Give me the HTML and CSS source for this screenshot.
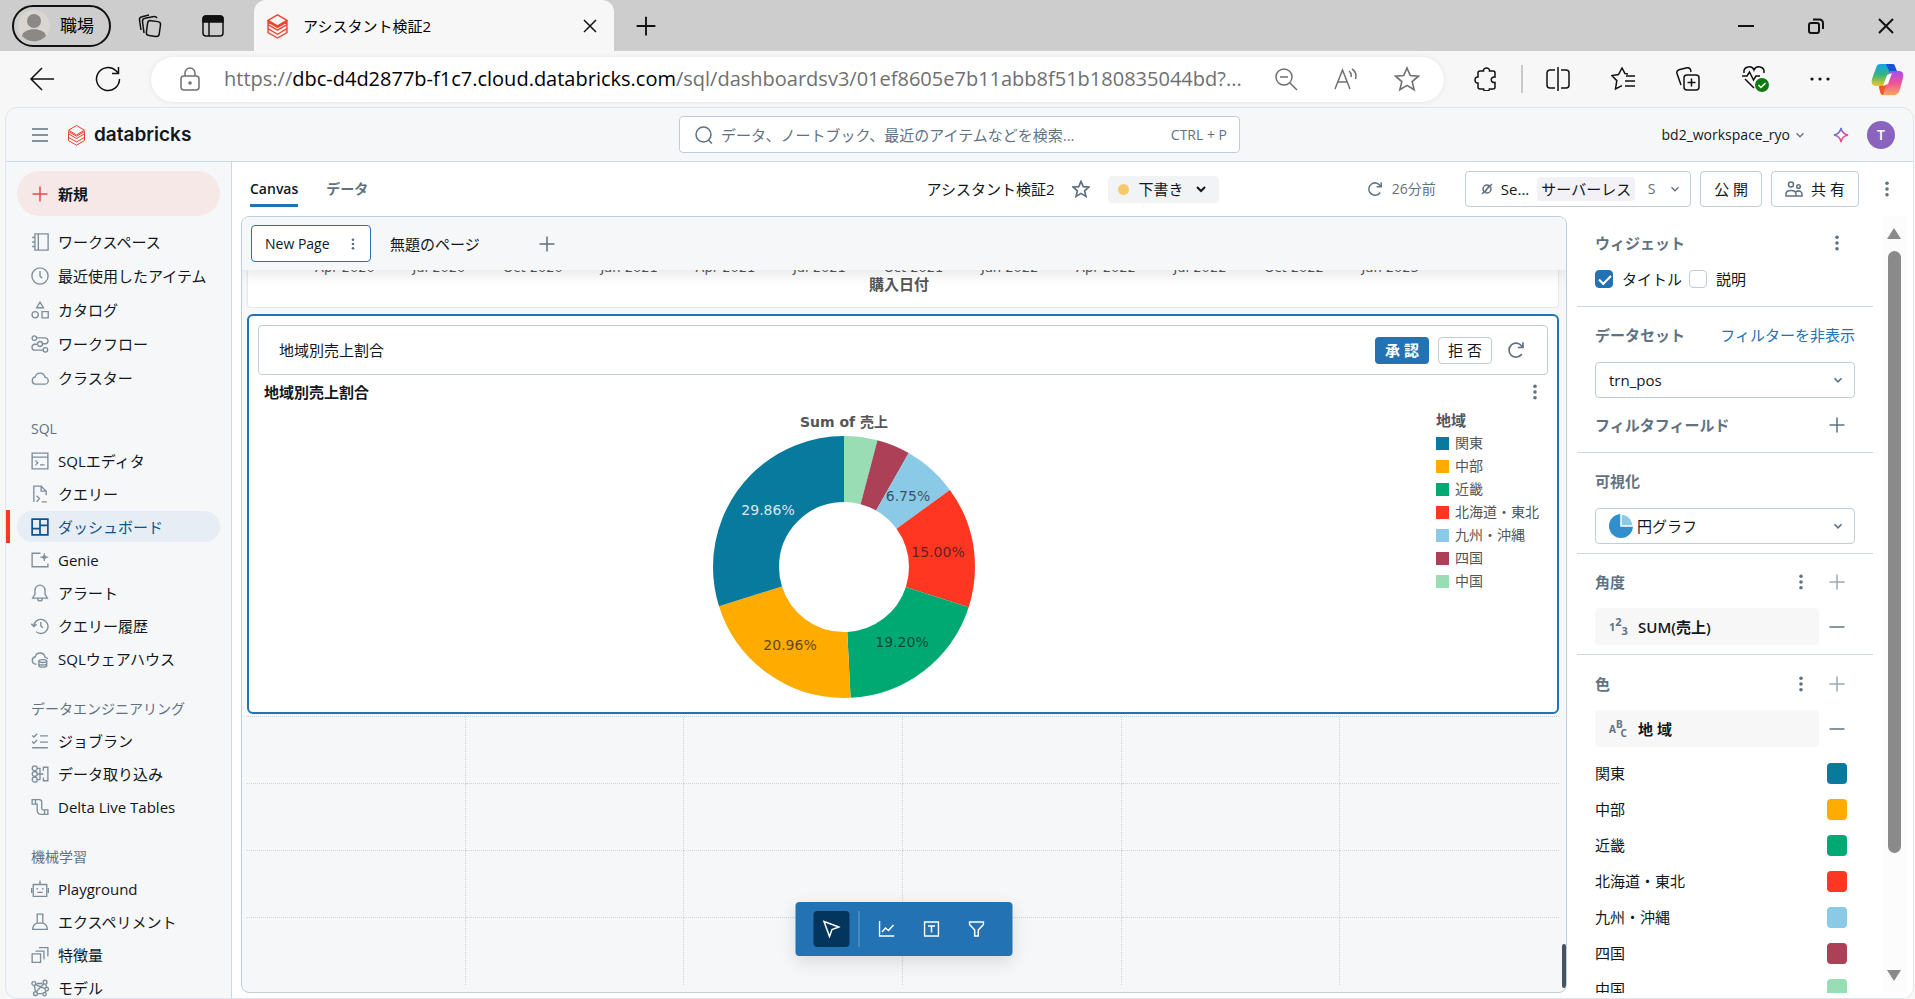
FILE: index.html
```html
<!DOCTYPE html>
<html lang="ja">
<head>
<meta charset="utf-8">
<title>アシスタント検証2</title>
<link rel="stylesheet" href="styles.css">
</head>
<body>
<svg class="defs" width="0" height="0" aria-hidden="true">
  <symbol id="chev" viewBox="0 0 16 16"><path d="M4 6l4 4 4-4"/></symbol>
  <symbol id="plus" viewBox="0 0 16 16"><path d="M8 .5v15M.5 8h15"/></symbol>
  <symbol id="minus" viewBox="0 0 16 16"><path d="M.5 8h15"/></symbol>
  <symbol id="dots" viewBox="0 0 16 16"><g fill="currentColor" stroke="none"><circle cx="8" cy="2.3" r="1.8"/><circle cx="8" cy="8" r="1.8"/><circle cx="8" cy="13.7" r="1.8"/></g></symbol>
  <symbol id="refresh" viewBox="0 0 16 16"><path d="M13.2 11.5A6.2 6.2 0 1 1 13.4 5M14.2 1.2v4.6H9.6"/></symbol>
  <symbol id="star" viewBox="0 0 16 16"><path d="M8 1.2l2 4.7 5 .4-3.800 3.300 1.200 5L8 11.900l-4.400 2.700 1.200-5L1 6.300l5-.4z"/></symbol>
  <symbol id="bricks" viewBox="0 0 18 22"><path d="M1 6.200L9 1.500l8 4.700-8 4.700zM1 9.800l8 4.700 8-4.700V7.500l-8 4.700-8-4.700zM1 13.300L9 18l8-4.700M1 10v6.600L9 21.200l8-4.600V10"/></symbol>
</svg>

<div class="tabstrip">
  <button class="profile"><svg class="face" viewBox="0 0 32 32"><circle cx="16" cy="16" r="16" fill="#d9d6d2"/><circle cx="16" cy="11" r="7" fill="#8b8886"/><path d="M4 26c1-9 23-9 24 0a16 16 0 0 1-24 0z" fill="#8b8886"/></svg>職場</button>
  <button class="ic strip-a" aria-label="ワークスペース"><svg class="i26" viewBox="0 0 26 26"><g><rect x="10" y="8" width="13" height="15" rx="3" transform="rotate(8 16 15)"/><path d="M7 20L5.500 8.500a3 3 0 0 1 2.500-3.200L17 3.500a3 3 0 0 1 3 1.800"/><path d="M4 17L2.500 7A3 3 0 0 1 5 3.700L12 2"/></g></svg></button>
  <button class="ic strip-b" aria-label="タブ操作"><svg class="i22" viewBox="0 0 22 22"><rect x="1" y="1" width="20" height="20" rx="3"/><path d="M1 7V4a3 3 0 0 1 3-3h14a3 3 0 0 1 3 3v3z" fill="currentColor"/><path d="M7 7v14"/></svg></button>
  <div class="tab"><svg class="fav" viewBox="0 0 18 22"><use href="#bricks"/></svg><span>アシスタント検証2</span><button class="ic" aria-label="閉じる"><svg class="i14" viewBox="0 0 14 14"><path d="M1 1l12 12M13 1L1 13"/></svg></button></div>
  <button class="ic newtab" aria-label="新しいタブ"><svg class="i20" viewBox="0 0 16 16"><use href="#plus"/></svg></button>
  <div class="win">
    <button class="ic" aria-label="最小化"><svg class="i16" viewBox="0 0 16 16"><path d="M0 8h16"/></svg></button>
    <button class="ic" aria-label="元に戻す"><svg class="i16" viewBox="0 0 16 16"><rect x="1" y="5" width="10" height="10" rx="2"/><path d="M5 1.500h6.500a3.500 3.500 0 0 1 3.500 3.500v6"/></svg></button>
    <button class="ic" aria-label="閉じる"><svg class="i16" viewBox="0 0 16 16"><path d="M1 1l14 14M15 1L1 15"/></svg></button>
  </div>
</div>

<div class="toolbar">
  <button class="ic" aria-label="戻る"><svg class="i26" viewBox="0 0 26 26"><path d="M25 13H2M13 2L2 13l11 11"/></svg></button>
  <button class="ic" aria-label="更新"><svg class="i26" viewBox="0 0 26 26"><path d="M24.500 13A11.500 11.500 0 1 1 21 4.800l2 2M23.500 1v6.500H17"/></svg></button>
  <div class="address">
    <svg class="i24" viewBox="0 0 24 24"><rect x="3" y="9" width="18" height="14" rx="3"/><path d="M7 9V6a5 5 0 0 1 10 0v3"/><circle cx="12" cy="16" r="1" fill="currentColor"/></svg>
    <div class="url">https://<b>dbc-d4d2877b-f1c7.cloud.databricks.com</b>/sql/dashboardsv3/01ef8605e7b11abb8f51b180835044bd?...</div>
    <div class="addr-icons">
      <button class="ic" aria-label="縮小"><svg class="i24" viewBox="0 0 24 24"><circle cx="10" cy="10" r="8"/><path d="M6 10h8M16 16l7 7"/></svg></button>
      <button class="ic" aria-label="読み上げ"><svg class="i24" viewBox="0 0 24 24"><path d="M1 22L8.500 3 16 22M4 15h9M15 4c2 1.500 2.500 4 2 6M18 2c4 2.500 4.500 6.500 3.500 10"/></svg></button>
      <button class="ic" aria-label="お気に入りに追加"><svg class="i26" viewBox="0 0 16 16"><use href="#star"/></svg></button>
    </div>
  </div>
  <div class="browser-icons">
    <button class="ic" aria-label="拡張機能"><svg class="i24" viewBox="0 0 24 24"><path d="M6 4h3.500c-.5-4 6.500-4 6 0H19a2 2 0 0 1 2 2v4c-5-1-5 6.500 0 5.500V20a2 2 0 0 1-2 2h-3.500c.5 2.500-6.500 2.500-6 0H6a2 2 0 0 1-2-2v-4c-4 .5-4-6.500 0-6V6a2 2 0 0 1 2-2z"/></svg></button>
    <span class="vline"></span>
    <button class="ic" aria-label="分割画面"><svg class="i24" viewBox="0 0 24 24"><path d="M9 3H4a3 3 0 0 0-3 3v12a3 3 0 0 0 3 3h5M15 3h5a3 3 0 0 1 3 3v12a3 3 0 0 1-3 3h-5M12 0v24"/></svg></button>
    <button class="ic" aria-label="お気に入り"><svg class="i24" viewBox="0 0 24 24"><path d="M17 7l-3-.5L11 1 7.500 7.500.8 8.600l5 5L4.500 22l6.500-3.400M15 9h9M14 14h10M14 19h10"/></svg></button>
    <button class="ic" aria-label="コレクション"><svg class="i24" viewBox="0 0 24 24"><rect x="8" y="8" width="15" height="15" rx="3"/><path d="M15.500 11.500v8M11.500 15.500h8M5 18L1 6.500a3 3 0 0 1 2-3.700L11 .8a3 3 0 0 1 3.500 2L15 5"/></svg></button>
    <button class="ic" aria-label="ブラウザーの健康状態"><svg class="i28" viewBox="0 0 28 28"><path d="M1 11h5l2.500-4 4 8 2.500-4h4M3 8c-1-7 8-8 10-3 2-5 11-4 10 3M4 14l9 9"/><circle cx="21" cy="20" r="7" fill="#107c10" stroke="none"/><path d="M17.500 20l2.500 2.500 4.500-4.500" stroke="#fff"/></svg></button>
    <button class="ic" aria-label="設定など"><svg class="i20" viewBox="0 0 20 20"><g fill="currentColor" stroke="none"><circle cx="2" cy="10" r="1.600"/><circle cx="10" cy="10" r="1.600"/><circle cx="18" cy="10" r="1.600"/></g></svg></button>
    <button class="ic" aria-label="Copilot"><svg class="i34" viewBox="0 0 34 34"><defs><linearGradient id="ca" x1="0" y1="0" x2="0" y2="1"><stop offset="0" stop-color="#18a0ee"/><stop offset=".5" stop-color="#35b67c"/><stop offset="1" stop-color="#f5c81c"/></linearGradient><linearGradient id="cb" x1="0" y1="0" x2="0" y2="1"><stop offset="0" stop-color="#a34ef0"/><stop offset=".5" stop-color="#ee5397"/><stop offset="1" stop-color="#ffa45c"/></linearGradient></defs><g stroke="none"><path d="M9 2h13l3 5h-5l-5 17H5c-4 0-5-3-4-7l4-11c1-3 2-4 4-4z" fill="url(#ca)"/><path d="M15 2h7c2 0 2 3 4 7l-7 2z" fill="#1554d1"/><path d="M19 9h9c4 0 5 3 4 7l-3 11c-1 4-3 6-6 6H12c-2 0-3-3-4-8h5z" fill="url(#cb)"/><path d="M8 24l7-1-3 10c-3 0-3-5-4-9z" fill="#ee5a2b"/><path d="M16 13l5-2-4 11-5 2z" fill="#fff"/></g></svg></button>
  </div>
</div>

<div class="frame">
  <header class="top">
    <div class="brand">
      <button class="ic" aria-label="メニュー"><svg class="i16" viewBox="0 0 16 16"><path d="M0 2h16M0 8h16M0 14h16"/></svg></button>
      <svg class="logo" viewBox="0 0 18 22"><use href="#bricks"/></svg><strong>databricks</strong>
    </div>
    <label class="search"><svg class="i18" viewBox="0 0 18 18"><circle cx="8.500" cy="8.500" r="7.500"/><path d="M13.500 14l3.500 3.500"/></svg><input type="search" aria-label="検索" placeholder="データ、ノートブック、最近のアイテムなどを検索..."><span>CTRL + P</span></label>
    <div class="account">
      <button class="ws">bd2_workspace_ryo<svg class="i14" viewBox="0 0 16 16"><use href="#chev"/></svg></button>
      <button class="ic" aria-label="アシスタント"><svg class="i16" viewBox="0 0 16 16"><defs><linearGradient id="sp" x1="0" y1="0" x2="1" y2="1"><stop offset="0.200" stop-color="#4a7df0"/><stop offset=".6" stop-color="#e8489c"/><stop offset="1" stop-color="#ff5a3c"/></linearGradient></defs><path d="M8 1c.8 4.500 2.500 6.200 7 7-4.500.8-6.200 2.500-7 7-.8-4.500-2.500-6.200-7-7 4.500-.8 6.200-2.500 7-7z" stroke="url(#sp)"/></svg></button>
      <button class="avatar">T</button>
    </div>
  </header>

  <div class="body">
    <nav class="side">
      <button class="new"><svg class="i16" viewBox="0 0 16 16"><use href="#plus"/></svg>新規</button>
      <ul class="first">
        <li><a href="#"><svg viewBox="0 0 16 16"><path d="M3.500.8h11.700v14.400H3.500zM6.500 1v14M1 4h3M1 8h3M1 12h3"/></svg>ワークスペース</a></li>
        <li><a href="#"><svg viewBox="0 0 16 16"><circle cx="8" cy="8" r="7.200"/><path d="M8 3.500V8l2 2"/></svg>最近使用したアイテム</a></li>
        <li><a href="#"><svg viewBox="0 0 16 16"><path d="M8 1l3 5H5zM9.800 9.500h5.500V15H9.800z"/><circle cx="3.700" cy="12.200" r="2.800"/></svg>カタログ</a></li>
        <li><a href="#"><svg viewBox="0 0 16 16"><circle cx="3" cy="2.800" r="2"/><circle cx="8" cy="8" r="2.200"/><circle cx="12.800" cy="13.200" r="2"/><path d="M5 2.500h7.500a2.500 2.500 0 0 1 0 5.300H10M6 8.200H3.500a2.500 2.500 0 0 0 0 5.300H11"/></svg>ワークフロー</a></li>
        <li><a href="#"><svg viewBox="0 0 16 16"><path d="M4 13.500a3.300 3.300 0 0 1-.2-6.500 4.400 4.400 0 0 1 8.600.3 3.100 3.100 0 0 1-.4 6.200z"/></svg>クラスター</a></li>
      </ul>
      <h2>SQL</h2>
      <ul>
        <li><a href="#"><svg viewBox="0 0 16 16"><path d="M1 1h14v14H1zM1 4.500h14M4 7.500L6 9.500 4 11.500M8 11.500h4"/></svg>SQLエディタ</a></li>
        <li><a href="#"><svg viewBox="0 0 16 16"><path d="M2.500 15V1H9l4.500 4.500V9M9 1v4.500h4.500M5 9.500l2.500 2.500L5 15M9.500 15H14"/></svg>クエリー</a></li>
        <li class="on"><a href="#"><svg viewBox="0 0 16 16"><path d="M1 1h14v14H1zM8 1v14M1 9.500h7M8 6.500h7"/></svg>ダッシュボード</a></li>
        <li><a href="#"><svg viewBox="0 0 16 16"><path d="M8.500 2H1v12h14v-3"/><path d="M11.800 2c.3 2.500 1 3.200 3.500 3.500-2.500.3-3.200 1-3.500 3.500-.3-2.500-1-3.200-3.500-3.500 2.500-.3 3.200-1 3.500-3.500z" fill="currentColor" stroke-width=".6"/></svg>Genie</a></li>
        <li><a href="#"><svg viewBox="0 0 16 16"><path d="M8 1a4.500 4.500 0 0 0-4.500 4.500V9L1.500 12.500h13L12.500 9V5.500A4.500 4.500 0 0 0 8 1zM6 13c0 2.600 4 2.600 4 0"/></svg>アラート</a></li>
        <li><a href="#"><svg viewBox="0 0 16 16"><path d="M2.500 8a6.300 6.300 0 1 1 2 5M.3 6l2.200 2.500L5 6.500M8.700 4.500V8l2 1.500"/></svg>クエリー履歴</a></li>
        <li><a href="#"><svg viewBox="0 0 16 16"><path d="M5 12.500H4a3.300 3.300 0 0 1-.2-6.500 4.400 4.400 0 0 1 8.600.3c1.200.2 2 .8 2.500 1.700"/><ellipse cx="10.500" cy="9.800" rx="3.500" ry="1.300"/><path d="M7 10v4c0 1.700 7 1.700 7 0v-4M7 12.200c0 1.500 7 1.500 7 0"/></svg>SQLウェアハウス</a></li>
      </ul>
      <h2>データエンジニアリング</h2>
      <ul>
        <li><a href="#"><svg viewBox="0 0 16 16"><path d="M1 3l1.500 1.500L5.500 1.500M1 8.500L2.500 10l3-3M8 3.500h7M8 9h7M1 14h14"/></svg>ジョブラン</a></li>
        <li><a href="#"><svg viewBox="0 0 16 16"><circle cx="3.300" cy="3" r="2.200"/><circle cx="3.300" cy="8" r="2.200"/><circle cx="3.300" cy="13" r="2.200"/><path d="M5.500 3H8v10H5.500M5.500 8H11M11 5V2h4v12h-4v-3"/></svg>データ取り込み</a></li>
        <li><a href="#"><svg viewBox="0 0 16 16"><path d="M1 1.500h3v4H1zM4 1.500h3.500a2 2 0 0 1 2 2V9a1.500 1.500 0 0 0 1.500 1.500h1M4 5.500h1.500V11a3.500 3.500 0 0 0 3.500 3.500h3M12 10.500h3v4h-3z"/></svg>Delta Live Tables</a></li>
      </ul>
      <h2>機械学習</h2>
      <ul>
        <li><a href="#"><svg viewBox="0 0 16 16"><path d="M2 4h12v10.500H2zM8 4V.5M.5 7v4.500M15.500 7v4.500M5.500 11h5"/><path d="M5.500 7v1.500M10.500 7v1.500"/></svg>Playground</a></li>
        <li><a href="#"><svg viewBox="0 0 16 16"><path d="M5.500 1h5v8h-5zM5.500 9c-3 1-4 3-4 5.500h13c0-2.500-1-4.500-4-5.500"/></svg>エクスペリメント</a></li>
        <li><a href="#"><svg viewBox="0 0 16 16"><path d="M1 7h7.500v7.500H1zM4 4.500h7.500V12M7 1.500h8V9"/></svg>特徴量</a></li>
        <li><a href="#"><svg viewBox="0 0 16 16"><circle cx="2.500" cy="4" r="1.700"/><circle cx="12.500" cy="2.800" r="1.700"/><circle cx="14" cy="9" r="1.500"/><circle cx="4" cy="13" r="1.700"/><circle cx="12" cy="13.500" r="1.500"/><path d="M4 5l8.500 3.500M4.500 11.500l7-7.500M3 6l1 5M6 13h4M5 4h5M13 5l1 2M13.500 10.500L12.500 12"/></svg>モデル</a></li>
      </ul>
    </nav>

    <main>
      <div class="dash-head">
        <div class="modes"><button class="on">Canvas</button><button>データ</button></div>
        <div class="title"><span>アシスタント検証2</span><svg class="i18 gray" viewBox="0 0 16 16"><use href="#star"/></svg><button class="draft"><i></i>下書き<svg class="i16" viewBox="0 0 16 16"><use href="#chev"/></svg></button></div>
        <div class="actions">
          <svg class="i16 gray" viewBox="0 0 16 16"><use href="#refresh"/></svg><span class="ago">26分前</span>
          <button class="btn wh"><svg class="i12 gray" viewBox="0 0 12 12"><circle cx="6" cy="6" r="4"/><path d="M1 11L11 1M4 9l4-6"/></svg><span>Se...</span><em>サーバーレス</em><small>S</small><svg class="i14 gray" viewBox="0 0 16 16"><use href="#chev"/></svg></button>
          <button class="btn">公 開</button>
          <button class="btn share"><svg class="i18 gray" viewBox="0 0 18 18"><circle cx="6" cy="4.500" r="2.500"/><circle cx="13.500" cy="6.500" r="1.800"/><path d="M1 16v-2c0-2.500 2-3.500 5-3.500s5 1 5 3.500v2zM11 11.500c3-1.500 6 0 6 2.500v2h-6"/></svg>共 有</button>
          <button class="ic kebab" aria-label="その他"><svg class="i16" viewBox="0 0 16 16"><use href="#dots"/></svg></button>
        </div>
      </div>

      <div class="work">
        <section class="canvas">
          <div class="pages">
            <button class="page on">New Page<svg class="i12" viewBox="0 0 16 16"><use href="#dots"/></svg></button>
            <button class="page">無題のページ</button>
            <button class="ic addpage" aria-label="ページを追加"><svg class="i16" viewBox="0 0 16 16"><use href="#plus"/></svg></button>
          </div>
          <div class="sheet">
            <div class="prev">
              <div class="ticks"><span>Apr 2020</span><span>Jul 2020</span><span>Oct 2020</span><span>Jan 2021</span><span>Apr 2021</span><span>Jul 2021</span><span>Oct 2021</span><span>Jan 2022</span><span>Apr 2022</span><span>Jul 2022</span><span>Oct 2022</span><span>Jan 2023</span></div>
              <div class="axis">購入日付</div>
            </div>
            <article class="widget">
              <div class="prompt"><input type="text" aria-label="プロンプト" value="地域別売上割合"><button class="ok">承 認</button><button class="no">拒 否</button><button class="ic" aria-label="再生成"><svg class="i18" viewBox="0 0 16 16"><use href="#refresh"/></svg></button></div>
              <div class="whead"><h3>地域別売上割合</h3><button class="ic" aria-label="メニュー"><svg class="i16" viewBox="0 0 16 16"><use href="#dots"/></svg></button></div>
              <div class="chart">
                <figure>
                  <figcaption>Sum of 売上</figcaption>
                  <svg class="donut" viewBox="-131 -131 262 262">
                    <g transform="rotate(-90)" fill="none" stroke-width="66">
                      <circle r="98" pathLength="100" stroke="#99ddb4" stroke-dasharray="4.13 100"/>
                      <circle r="98" pathLength="100" stroke="#ab4057" stroke-dasharray="4.1 100" stroke-dashoffset="-4.13"/>
                      <circle r="98" pathLength="100" stroke="#8bcae7" stroke-dasharray="6.75 100" stroke-dashoffset="-8.23"/>
                      <circle r="98" pathLength="100" stroke="#ff3621" stroke-dasharray="15 100" stroke-dashoffset="-14.98"/>
                      <circle r="98" pathLength="100" stroke="#00a972" stroke-dasharray="19.2 100" stroke-dashoffset="-29.98"/>
                      <circle r="98" pathLength="100" stroke="#ffab00" stroke-dasharray="20.96 100" stroke-dashoffset="-49.18"/>
                      <circle r="98" pathLength="100" stroke="#077a9d" stroke-dasharray="29.86 100" stroke-dashoffset="-70.14"/>
                    </g>
                    <g text-anchor="middle">
                      <text class="lt" x="-76" y="-52">29.86%</text><text x="64" y="-66">6.75%</text><text x="94" y="-10">15.00%</text><text x="58" y="80">19.20%</text><text x="-54" y="83">20.96%</text>
                    </g>
                  </svg>
                </figure>
                <div class="legend">
                  <h4>地域</h4>
                  <ul><li class="c1">関東</li><li class="c2">中部</li><li class="c3">近畿</li><li class="c4">北海道・東北</li><li class="c5">九州・沖縄</li><li class="c6">四国</li><li class="c7">中国</li></ul>
                </div>
              </div>
            </article>
            <div class="grid"><i></i><i></i><i></i><i></i><i></i><i></i><i></i><i></i><i></i><i></i><i></i><i></i><i></i><i></i><i></i><i></i><i></i><i></i><i></i><i></i><i></i><i></i><i></i><i></i></div>
          </div>
          <span class="cthumb"></span>
          <div class="tools">
            <button class="sel" aria-label="選択"><svg class="i18" viewBox="0 0 18 18"><path d="M1.500 1.500l15 5.500-7 2.500-2.500 7z"/></svg></button><span></span>
            <button aria-label="可視化を追加"><svg class="i16" viewBox="0 0 16 16"><path d="M1 0v15h15M3.500 11l3.500-4 3 2.500 5-5.500"/></svg></button>
            <button aria-label="テキストを追加"><svg class="i16" viewBox="0 0 16 16"><path d="M1 1h14v14H1zM4.500 5h7M8 5v6.500"/></svg></button>
            <button aria-label="フィルターを追加"><svg class="i16" viewBox="0 0 16 16"><path d="M1 1h14v2.500L9.800 9v6H6.200V9L1 3.500z"/></svg></button>
          </div>
        </section>

        <aside>
          <div class="props">
            <section class="p1">
              <div class="row"><h3>ウィジェット</h3><button class="ic" aria-label="メニュー"><svg class="i16" viewBox="0 0 16 16"><use href="#dots"/></svg></button></div>
              <div class="checks"><label><input type="checkbox" checked>タイトル</label><label><input type="checkbox">説明</label></div>
            </section>
            <section class="p2">
              <div class="row"><h3>データセット</h3><a href="#">フィルターを非表示</a></div>
              <div class="pick"><select aria-label="データセット"><option>trn_pos</option></select><svg class="i14" viewBox="0 0 16 16"><use href="#chev"/></svg></div>
              <div class="row"><h3>フィルタフィールド</h3><button class="ic" aria-label="追加"><svg class="i16" viewBox="0 0 16 16"><use href="#plus"/></svg></button></div>
            </section>
            <section class="p3">
              <div class="row"><h3>可視化</h3></div>
              <div class="pick viz"><svg class="pie" viewBox="0 0 24 24"><circle cx="12" cy="12" r="12" fill="#338fcc"/><path d="M12 12V0a12 12 0 0 1 12 12z" fill="#8bcae7" stroke="#fff"/></svg><select aria-label="可視化"><option>円グラフ</option></select><svg class="i14" viewBox="0 0 16 16"><use href="#chev"/></svg></div>
            </section>
            <section class="p4">
              <div class="row"><h3>角度</h3><button class="ic" aria-label="メニュー"><svg class="i16" viewBox="0 0 16 16"><use href="#dots"/></svg></button><button class="ic faint" aria-label="追加"><svg class="i16" viewBox="0 0 16 16"><use href="#plus"/></svg></button></div>
              <div class="field"><button class="chip"><span class="type"><span>1</span><sup>2</sup><sub>3</sub></span>SUM(売上)</button><button class="ic" aria-label="削除"><svg class="i16" viewBox="0 0 16 16"><use href="#minus"/></svg></button></div>
            </section>
            <section class="p5">
              <div class="row"><h3>色</h3><button class="ic" aria-label="メニュー"><svg class="i16" viewBox="0 0 16 16"><use href="#dots"/></svg></button><button class="ic faint" aria-label="追加"><svg class="i16" viewBox="0 0 16 16"><use href="#plus"/></svg></button></div>
              <div class="field"><button class="chip"><span class="type abc"><span>A</span><sup>B</sup><sub>C</sub></span>地 域</button><button class="ic" aria-label="削除"><svg class="i16" viewBox="0 0 16 16"><use href="#minus"/></svg></button></div>
              <ul class="colors"><li class="c1">関東</li><li class="c2">中部</li><li class="c3">近畿</li><li class="c4">北海道・東北</li><li class="c5">九州・沖縄</li><li class="c6">四国</li><li class="c7">中国</li></ul>
            </section>
          </div>
          <div class="scroll"><i class="up"></i><i class="thumb"></i><i class="down"></i></div>
        </aside>
      </div>
    </main>
  </div>
</div>
</body>
</html>
```
FILE: styles.css
```css
* { box-sizing: border-box; margin: 0; padding: 0; }
body {
  display: flex; flex-direction: column; height: 100vh; overflow: hidden;
  background: #f7f7f7; color: #11171c;
  font: 15px/20px "Open Sans", "Noto Sans CJK JP", sans-serif;
}
button, input, select { font: inherit; color: inherit; background: none; border: 0; }
ul { list-style: none; }
a { color: inherit; text-decoration: none; }
svg { flex: none; fill: none; stroke: currentColor; stroke-width: 1.5; }
.defs { position: absolute; }
.ic { display: flex; align-items: center; justify-content: center; flex: none; color: #5f7281; }
.gray { color: #5f7281; }
.i12 { width: 12px; height: 12px; }
.i14 { width: 14px; height: 14px; }
.i16 { width: 16px; height: 16px; }
.i18 { width: 18px; height: 18px; }
.i20 { width: 20px; height: 20px; }
.i22 { width: 22px; height: 22px; }
.i24 { width: 24px; height: 24px; }
.i26 { width: 26px; height: 26px; }
.i28 { width: 28px; height: 28px; }
.i34 { width: 34px; height: 34px; }

/* Browser tab strip */
.tabstrip { display: flex; align-items: center; flex: none; height: 51px; padding-left: 12px; background: #cdcdcd; color: #000; }
.tabstrip .ic { color: #111; }
.profile { display: flex; align-items: center; gap: 10px; width: 99px; height: 42px; padding-left: 4px; border: 2px solid #111; border-radius: 21px; font-size: 17px; }
.face { width: 32px; height: 32px; stroke: none; }
.strip-a { margin-left: 26px; }
.strip-b { margin-left: 39px; }
.tab { display: flex; align-items: center; width: 360px; height: 51px; margin-left: 30px; padding: 0 17px 0 12px; background: #f7f7f7; border-radius: 12px 12px 0 0; }
.tab span { flex: 1; margin-left: 14px; }
.fav { width: 23px; height: 26px; color: #f0452f; stroke-width: 1.2; }
.newtab { margin-left: 22px; }
.win { display: flex; gap: 54px; margin-left: auto; padding-right: 21px; }
.win svg { stroke-width: 2; }

/* Browser toolbar */
.toolbar { display: flex; align-items: center; flex: none; height: 56px; padding-left: 29px; gap: 40px; }
.toolbar .ic { color: #111; }
.address { display: flex; align-items: center; flex: 1; min-width: 0; height: 45px; padding: 0 24px 0 27px; background: #fff; border-radius: 23px; color: #707070; box-shadow: 0 0 5px #e2e2e2; }
.url { flex: 1; min-width: 0; margin-left: 22px; overflow: hidden; white-space: nowrap; font-size: 20px; line-height: 28px; }
.url b { font-weight: 400; color: #000; }
.addr-icons { display: flex; gap: 36px; }
.address .addr-icons .ic { color: #707070; }
.toolbar > .ic + .address { margin-left: -10px; }
.addr-icons .i26 { stroke-width: 1; }
.browser-icons { display: flex; align-items: center; gap: 41px; margin-left: -10px; padding-right: 10px; }
.browser-icons .vline { width: 2px; height: 28px; margin: 0 -18px; background: #c9c9c9; }

/* Workspace frame and header */
.frame { display: flex; flex-direction: column; flex: 1; min-height: 0; margin: 0 1px 0 5px; border: 1px solid #e1e5e9; border-radius: 12px; background: #f6f7f9; overflow: hidden; }
.top { display: grid; grid-template-columns: 1fr 561px 1fr; align-items: center; flex: none; height: 54px; border-bottom: 1px solid #cdd7df; }
.brand { display: flex; align-items: center; padding-left: 26px; }
.logo { width: 19px; height: 22px; margin: 0 8px 0 19px; color: #ee3d2c; stroke-width: 1; }
.brand strong { font: 600 19px/24px Inter, sans-serif; }
.search { display: flex; align-items: center; height: 37px; padding: 0 12px 0 15px; gap: 8px; border: 1px solid #c0cdd8; border-radius: 4px; background: #fff; color: #5f7281; }
.search input { flex: 1; min-width: 0; outline: 0; }
.search input::placeholder { color: #5f7281; opacity: 1; }
.search span { font-size: 14px; }
.account { display: flex; align-items: center; justify-content: flex-end; padding-right: 18px; gap: 18px; }
.ws { display: flex; align-items: center; gap: 3px; margin-right: 8px; font-size: 14px; }
.avatar { width: 28px; height: 28px; border-radius: 50%; background: #8a63bf; color: #fff; font-weight: 600; font-size: 14px; }
.ws svg { color: #5f7281; }

.body { display: flex; flex: 1; min-height: 0; }

/* Sidebar */
.side { flex: none; width: 226px; padding: 9px 11px 0; border-right: 1px solid #cdd7df; overflow: hidden; }
.new { display: flex; align-items: center; gap: 10px; width: 203px; height: 45px; margin-bottom: 9px; padding-left: 15px; border-radius: 23px; background: #f7e8e8; font-weight: 600; }
.new svg { color: #e5484d; }
.side li { padding: 1px 0; }
.side a { display: flex; align-items: center; gap: 9px; height: 31px; padding-left: 14px; border-radius: 16px; font-size: 15px; white-space: nowrap; }
.side .first a { height: 32px; }
.side a svg { width: 18px; height: 18px; color: #7d8e9b; stroke-width: 1.2; }
.side h2 { margin: 23px 0 4px 14px; font-weight: 400; font-size: 14px; line-height: 22px; color: #5f7281; }
.side .on a { background: #e6edf4; color: #0e538b; }
.side .on a svg { color: #0e538b; stroke-width: 1.5; }
.side .on { margin-left: -11px; border-left: 4px solid #ff3621; padding-left: 7px; }

/* Dashboard header */
main { display: flex; flex-direction: column; flex: 1; min-width: 0; background: #fff; }
.dash-head { display: grid; grid-template-columns: 1fr auto 1fr; align-items: center; flex: none; height: 54px; padding: 0 7px 0 18px; }
.modes { display: flex; gap: 28px; }
.modes button { padding: 8px 0 5px; border-bottom: 3px solid transparent; font-weight: 600; font-size: 14px; line-height: 20px; color: #5f7281; }
.modes .on { border-color: #2272b4; color: #11171c; }
.title { display: flex; align-items: center; gap: 18px; margin-left: -11px; }
.draft { display: flex; align-items: center; gap: 9px; height: 27px; padding: 0 10px; border-radius: 4px; background: #f1f3f5; }
.draft i { width: 11px; height: 11px; border-radius: 50%; background: #f9c868; }
.draft svg { stroke-width: 2; }
.actions { display: flex; align-items: center; justify-content: flex-end; gap: 9px; white-space: nowrap; }
.ago { margin-right: 20px; color: #5f7281; font-size: 14px; }
.btn { display: flex; align-items: center; gap: 8px; height: 36px; padding: 0 13px; border: 1px solid #c0cdd8; border-radius: 4px; }
.wh { padding: 0 8px 0 15px; }
.wh em { padding: 2px 4px; border-radius: 4px; background: #f1f1f6; font-style: normal; }
.wh small { width: 17px; font-size: 14px; color: #5f7281; }
.kebab { width: 38px; }

/* Canvas */
.work { display: flex; flex: 1; min-height: 0; padding-left: 9px; gap: 10px; }
.canvas { position: relative; display: flex; flex-direction: column; flex: 1; min-width: 0; margin-bottom: 5px; border: 1px solid #c0cdd8; border-radius: 8px; background: #f6f7f9; overflow: hidden; }
.pages { z-index: 1; display: flex; align-items: center; flex: none; height: 53px; padding: 0 9px; box-shadow: 0 4px 14px rgba(0, 0, 0, .1); background: #f6f7f9; }
.page { height: 37px; padding: 0 11px 0 13px; border: 1px solid transparent; border-radius: 4px; }
.page.on { display: flex; align-items: center; justify-content: space-between; width: 120px; margin-right: 5px; background: #fff; border-color: #2272b4; font-size: 14px; }
.page svg { color: #5f7281; }
.addpage { margin-left: 47px; }
.sheet { display: flex; flex-direction: column; flex: 1; min-height: 0; padding: 0 7px 7px 5px; }
.prev { flex: none; height: 38px; margin-bottom: 6px; border: 1px solid #e4e8eb; border-top: 0; border-radius: 0 0 4px 4px; background: #fff; color: #555; }
.ticks { display: flex; align-items: flex-end; justify-content: space-between; height: 6px; padding: 0 139px 0 67px; overflow: hidden; font: 13px/16px "DejaVu Sans", sans-serif; }
.axis { padding-right: 8px; text-align: center; font-weight: 700; font-size: 15px; line-height: 16px; }
.widget { flex: none; display: flex; flex-direction: column; padding: 9px; height: 400px; border: 2px solid #2272b4; border-radius: 6px; background: #fff; }
.prompt { display: flex; align-items: center; flex: none; height: 50px; padding: 0 22px 0 20px; border: 1px solid #c0cdd8; border-radius: 4px; }
.prompt input { flex: 1; min-width: 0; }
.prompt .ic { margin-left: 15px; }
.ok, .no { width: 54px; height: 27px; border-radius: 4px; }
.ok { background: #2272b4; color: #fff; font-weight: 600; }
.no { margin-left: 9px; border: 1px solid #c0cdd8; }
.whead { display: flex; align-items: center; justify-content: space-between; padding: 7px 5px 0 6px; }
.whead h3 { font-weight: 700; font-size: 15px; line-height: 20px; }
.chart { display: grid; grid-template-columns: 1fr 112px; }
figure { display: flex; flex-direction: column; align-items: center; padding: 8px 6px 0 0; }
figcaption { padding-bottom: 2px; font: 700 14px/24px "DejaVu Sans", "Noto Sans CJK JP", sans-serif; color: #555; }
.donut { width: 262px; height: 262px; stroke: none; overflow: visible; }
.donut text { font: 14px "DejaVu Sans", sans-serif; fill: #11171c; fill-opacity: .7; }
.donut .lt { fill: #fff; fill-opacity: .85; }
.legend { padding-top: 6px; color: #555; font-size: 14px; white-space: nowrap; }
.legend h4 { font-size: 15px; line-height: 24px; }
.legend li { display: flex; align-items: center; gap: 6px; height: 22px; margin-bottom: 1px; }
.legend li::before { content: ""; width: 13px; height: 13px; background: var(--c); }
.c1 { --c: #077a9d; } .c2 { --c: #ffab00; } .c3 { --c: #00a972; } .c4 { --c: #ff3621; }
.c5 { --c: #8bcae7; } .c6 { --c: #ab4057; } .c7 { --c: #99ddb4; }
.grid { display: grid; grid-template: repeat(4, 1fr) / repeat(6, 1fr); flex: 1; margin-top: 2px; border-top: 1px dotted #cdd2d7; }
.grid i { border: 0 dotted #cdd2d7; border-width: 0 1px 1px 0; }
.grid i:nth-child(6n) { border-right: 0; }
.grid i:nth-child(n+19) { border-bottom: 0; }
.cthumb { position: absolute; right: 0; bottom: 4px; width: 4px; height: 44px; border-radius: 2px; background: #445461; }
.tools { position: absolute; bottom: 36px; left: 50%; transform: translateX(-50%); display: flex; align-items: center; gap: 9px; padding: 9px 18px; border-radius: 4px; background: #2272b4; box-shadow: 0 6px 18px rgba(0, 0, 0, .12); }
.tools button { display: flex; align-items: center; justify-content: center; width: 36px; height: 36px; border-radius: 4px; color: #fff; }
.tools .sel { background: #04355d; }
.tools span { width: 1px; height: 36px; background: #6ba1d0; }

/* Properties panel */
aside { display: flex; flex: none; width: 336px; gap: 9px; margin-bottom: 5px; }
.props { width: 296px; overflow: hidden; }
.props section { padding: 0 18px; border-bottom: 1px solid #cdd7df; }
.props .p5 { border: 0; }
.row { display: flex; align-items: center; height: 30px; }
.row h3 { flex: 1; font-weight: 600; font-size: 15px; line-height: 20px; color: #5f7281; }
.row .ic, .field .ic { width: 36px; }
.row a { color: #2272b4; }
.row .faint { color: #9aa8b3; }
.props .p1 { padding-top: 12px; height: 91px; }
.checks { display: flex; gap: 7px; padding-top: 11px; }
.checks label { display: flex; align-items: center; gap: 9px; }
.checks input { appearance: none; width: 18px; height: 18px; border: 1px solid #c0cdd8; border-radius: 4px; background: #fff; }
.checks input:checked { background: #2272b4; border-color: #2272b4; }
.checks input:checked::before { content: ""; display: block; width: 10px; height: 5px; margin: 4px 0 0 3px; border: solid #fff; border-width: 0 0 2px 2px; transform: rotate(-45deg); }
.props .p2 { height: 146px; padding-top: 13px; }
.p2 .pick { margin: 12px 0; }
.pick { display: flex; align-items: center; height: 36px; padding: 0 9px 0 13px; border: 1px solid #c0cdd8; border-radius: 4px; }
.pick select { appearance: none; flex: 1; outline: 0; }
.pick > .i14 { color: #5f7281; stroke-width: 2; }
.pie { width: 24px; height: 24px; stroke: none; margin-right: 4px; }
.props .p3 { height: 101px; padding-top: 13px; }
.p3 .pick { margin-top: 12px; }
.props .p4 { height: 101px; padding-top: 13px; }
.field { display: flex; margin-top: 11px; }
.chip { display: flex; align-items: center; flex: 1; height: 37px; padding-left: 14px; gap: 11px; border-radius: 4px; background: #f7f7f7; font-weight: 600; }
.type { display: flex; align-items: center; width: 18px; color: #5f7281; font: 700 11px/12px "Noto Sans", sans-serif; }
.type.abc { font-size: 10px; }
.type sup, .type sub { font-size: inherit; line-height: 12px; vertical-align: baseline; }
.type sup { padding-bottom: 9px; }
.type sub { padding-top: 9px; }
.type.abc sub { margin-left: -2px; }
.props .p5 { padding-top: 14px; }
.colors { padding: 8px 8px 0 0; }
.colors li { display: flex; align-items: center; justify-content: space-between; height: 36px; }
.colors li::after { content: ""; width: 20px; height: 21px; border-radius: 4px; background: var(--c); }
.scroll { display: flex; flex-direction: column; align-items: center; width: 24px; padding: 12px 0; background: #fcfcfc; }
.up, .down { border: 7px solid transparent; }
.up { border-top: 0; border-bottom: 11px solid #8a8a8a; }
.down { margin-top: auto; border-bottom: 0; border-top: 11px solid #8a8a8a; }
.thumb { width: 13px; height: 80%; margin-top: 12px; border-radius: 7px; background: #8a8a8a; }
```
